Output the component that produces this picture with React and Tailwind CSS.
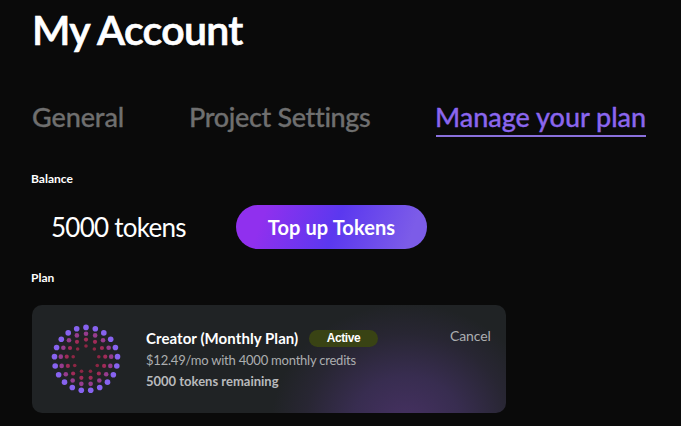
const TABS = [
  { label: "General", className: "w-[157px]", textClass: "tracking-[-0.1px] text-[#6f6f6f]" },
  { label: "Project Settings", className: "w-[246px]", textClass: "tracking-[-0.35px] text-[#6f6f6f]" },
  { label: "Manage your plan", className: "", textClass: "tracking-[-0.03px] text-[#8b66ee]", active: true },
];

// outermost ring first
const RINGS = [
  { count: 21, radius: 31.6, size: 2.8, color: "#8763f0" },
  { count: 17, radius: 25.3, size: 2.3, color: "#963c8e" },
  { count: 13, radius: 19.4, size: 2.1, color: "#a02b58" },
  { count: 9, radius: 13, size: 1.8, color: "#8c2644" },
];

function PlanLogo() {
  return (
    <svg className="h-[70px] w-[70px]" viewBox="-35 -35 70 70">
      {RINGS.map((ring) =>
        Array.from({ length: ring.count }, (_, i) => {
          const angle = (i / ring.count) * Math.PI * 2;
          return (
            <circle
              key={`${ring.count}-${i}`}
              cx={Math.sin(angle) * ring.radius}
              cy={-Math.cos(angle) * ring.radius}
              r={ring.size}
              fill={ring.color}
            />
          );
        })
      )}
    </svg>
  );
}

function App() {
  return (
    <div className="h-[426px] w-[681px] overflow-hidden bg-[#0a0a0a] pl-8 font-['Lato',sans-serif] text-white">
      <h1 className="h-[97px] pt-[6px] text-[41px] leading-[48px] font-semibold tracking-[-0.7px] whitespace-nowrap [-webkit-text-stroke:0.7px]">
        My Account
      </h1>

      <nav className="flex h-[74px] items-start whitespace-nowrap text-[27px] leading-[40px] font-medium [-webkit-text-stroke:0.3px]">
        {TABS.map((tab) => (
          <div key={tab.label} className={tab.className}>
            <div className={tab.active ? "ml-px h-10 w-[210px] border-b-2 border-[#8a70dc]" : "h-10"}>
              <span className={tab.active ? `-ml-px ${tab.textClass}` : tab.textClass}>{tab.label}</span>
            </div>
          </div>
        ))}
      </nav>

      <h2 className="-ml-px h-[34px] text-[12px] leading-4 font-bold">Balance</h2>
      <div className="flex h-11 items-center">
        <div className="w-[204px] pl-[19px] text-[26px] tracking-[-0.75px]">5000 tokens</div>
        <button className="h-11 w-[191px] rounded-full bg-linear-[110deg,#9030ee_15%,#5b38ef_52%,#7c5ce8_90%] text-[20px] font-bold tracking-[0.1px]">
          Top up Tokens
        </button>
      </div>
      <h2 className="-ml-px mt-[21px] h-[35px] text-[12px] leading-4 font-bold">Plan</h2>

      <section className="flex h-[108px] w-[474px] rounded-[10px] bg-[#202325] bg-[radial-gradient(ellipse_135px_120px_at_79%_110%,#463162,#382d50_40%,#282633_75%,transparent)] pl-[19px]">
        <div className="w-[95px] pt-[19px]">
          <PlanLogo />
        </div>
        <div className="w-[304px] pt-[22px] whitespace-nowrap">
          <div className="flex h-[22px] items-center text-[15px] font-bold">
            <span className="w-[163px] tracking-[0.07px]">Creator (Monthly Plan)</span>
            <span className="h-[17px] w-[69px] rounded-full bg-[#394314] text-center font-['Liberation_Sans',sans-serif] text-[12px] leading-[17px] font-bold tracking-[-0.4px]">
              Active
            </span>
          </div>
          <p className="text-[13px] leading-[22px] tracking-[-0.22px] text-[#acaeb0]">
            $12.49/mo with 4000 monthly credits
          </p>
          <p className="text-[13px] leading-[21px] font-bold text-[#b8babc]">5000 tokens remaining</p>
        </div>
        <div className="pt-[20px] text-[14px] leading-[22px] tracking-[-0.1px] text-[#acaeb0]">Cancel</div>
      </section>
    </div>
  );
}

export default App;
